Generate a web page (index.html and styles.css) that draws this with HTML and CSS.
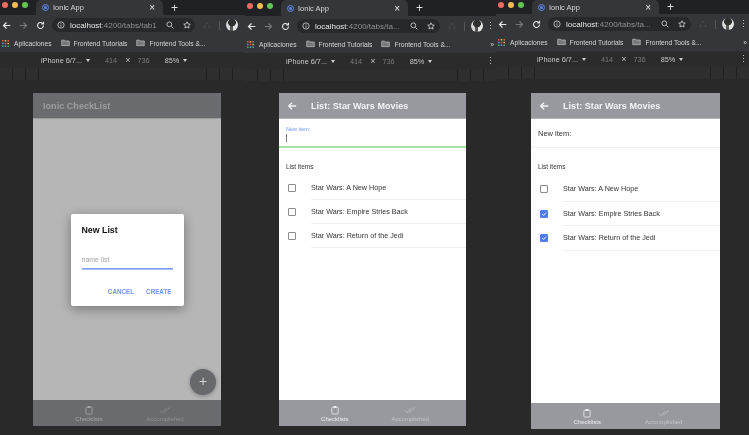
FILE: index.html
```html
<!DOCTYPE html>
<html lang="en">

<head>
    <meta charset="UTF-8">
    <meta name="viewport" content="width=device-width, initial-scale=1.0">
    <title>Ionic CheckList</title>
    <link rel="stylesheet" href="styles.css">
</head>

<body>
    <svg class="sprites" width="0" height="0">
        <symbol id="i-back" viewBox="0 0 12 12"><path d="M11 6H2M6 2 2 6l4 4" fill="none" stroke="currentColor" stroke-width="1.6"/></symbol>
        <symbol id="i-forward" viewBox="0 0 12 12"><path d="M1 6h9M6 2l4 4-4 4" fill="none" stroke="currentColor" stroke-width="1.6"/></symbol>
        <symbol id="i-reload" viewBox="0 0 12 12"><path d="M10 6a4 4 0 1 1-1.2-2.9M10 1v3H7" fill="none" stroke="currentColor" stroke-width="1.5"/></symbol>
        <symbol id="i-info" viewBox="0 0 12 12"><circle cx="6" cy="6" r="4.7" fill="none" stroke="currentColor" stroke-width="1.1"/><path d="M6 5.2v3.4M6 3.2v1" stroke="currentColor" stroke-width="1.1"/></symbol>
        <symbol id="i-search" viewBox="0 0 12 12"><circle cx="5" cy="5" r="3.6" fill="none" stroke="currentColor" stroke-width="1.1"/><path d="m8 8 3 3" stroke="currentColor" stroke-width="1.2"/></symbol>
        <symbol id="i-star" viewBox="0 0 12 12"><path d="m6 1.2 1.5 3.2 3.4.4-2.5 2.3.7 3.4-3.1-1.7-3.1 1.7.7-3.4L1.100 4.800l3.400-.4z" fill="none" stroke="currentColor" stroke-width="1.100"/></symbol>
        <symbol id="i-recycle" viewBox="0 0 12 12"><path d="M4 5 6 1.500 8 5M9.500 6l1.500 3.500H7.500M4.500 9.500H1L2.500 6" fill="none" stroke="currentColor" stroke-width="1.100"/></symbol>
        <symbol id="i-folder" viewBox="0 0 12 10"><path d="M1 1.500h3.500l1 1.200H11v6.300H1z" fill="#77787c" stroke="#c9cacc" stroke-width=".9"/></symbol>
        <symbol id="i-apps" viewBox="0 0 9 9"><path d="M0 0h2v2H0z" fill="#e2574c"/><path d="M3.500 0h2v2h-2z" fill="#e8b33f"/><path d="M7 0h2v2H7z" fill="#e2574c"/><path d="M0 3.500h2v2H0z" fill="#4f8ff0"/><path d="M3.500 3.500h2v2h-2z" fill="#e2574c"/><path d="M7 3.500h2v2H7z" fill="#e8b33f"/><path d="M0 7h2v2H0z" fill="#4caf6a"/><path d="M3.500 7h2v2h-2z" fill="#4f8ff0"/><path d="M7 7h2v2H7z" fill="#4caf6a"/></symbol>
        <symbol id="i-clipboard" viewBox="0 0 12 14"><rect x="1.300" y="2.700" width="9.400" height="10.300" rx="1.400" fill="none" stroke="currentColor" stroke-width="1.200"/><path d="M4 1h4v3H4z" fill="currentColor"/></symbol>
        <symbol id="i-done-all" viewBox="0 0 16 10"><path d="m1 5.500 3 3 5.500-6M7 8l7.500-6.500" fill="none" stroke="currentColor" stroke-width="1"/></symbol>
        <symbol id="i-tick" viewBox="0 0 10 10"><path d="m2 5.200 2.200 2.200L8 3" fill="none" stroke="#fff" stroke-width="1.500"/></symbol>
    </svg>

    <div class="desktop">
        <!-- first window: new list dialog -->
        <section class="window window-one">
            <div class="tabs">
                <span class="lights"><i class="red"></i><i class="yellow"></i><i class="green"></i></span>
                <div class="tab"><span class="favicon"></span><span class="tab-title">Ionic App</span><span class="tab-close">×</span></div>
                <span class="new-tab">+</span>
            </div>
            <div class="toolbar">
                <svg class="nav-icon"><use href="#i-back"/></svg>
                <svg class="nav-icon faded"><use href="#i-forward"/></svg>
                <svg class="nav-icon"><use href="#i-reload"/></svg>
                <div class="omnibox">
                    <svg class="omni-icon"><use href="#i-info"/></svg>
                    <span class="url"><b>localhost</b>:4200/tabs/tab1</span>
                    <svg class="omni-icon"><use href="#i-search"/></svg>
                    <svg class="omni-icon"><use href="#i-star"/></svg>
                </div>
                <svg class="omni-icon dim"><use href="#i-recycle"/></svg>
                <span class="divider"></span>
                <span class="avatar"></span>
            </div>
            <div class="bookmarks">
                <svg class="apps"><use href="#i-apps"/></svg><span>Aplicaciones</span>
                <svg class="folder"><use href="#i-folder"/></svg><span>Frontend Tutorials</span>
                <svg class="folder"><use href="#i-folder"/></svg><span>Frontend Tools &amp;...</span>
            </div>
            <div class="device-bar">
                <span class="device">iPhone 6/7... <i class="caret"></i></span>
                <span class="size">414</span><span class="times">×</span><span class="size">736</span>
                <span class="zoom">85% <i class="caret"></i></span>
            </div>
            <div class="ruler"><i></i><i></i><i></i><i class="wide"></i><i></i><i></i><i></i></div>
            <div class="stage">
                <div class="phone dimmed">
                    <header class="app-bar"><span class="app-title">Ionic CheckList</span></header>
                    <div class="screen centered">
                        <div class="dialog">
                            <h2>New List</h2>
                            <div class="dialog-input">name list</div>
                            <div class="dialog-actions"><span>CANCEL</span><span>CREATE</span></div>
                        </div>
                        <div class="fab">+</div>
                    </div>
                    <footer class="tab-bar">
                        <div class="tab-item"><svg class="tab-icon"><use href="#i-clipboard"/></svg>Checklists</div>
                        <div class="tab-item muted"><svg class="tab-icon wide-icon"><use href="#i-done-all"/></svg>Accomplished</div>
                    </footer>
                </div>
            </div>
        </section>

        <!-- second window: typing a new item -->
        <section class="window window-two">
            <div class="tabs">
                <span class="lights"><i class="red"></i><i class="yellow"></i><i class="green"></i></span>
                <div class="tab"><span class="favicon"></span><span class="tab-title">Ionic App</span><span class="tab-close">×</span></div>
                <span class="new-tab">+</span>
            </div>
            <div class="toolbar">
                <svg class="nav-icon"><use href="#i-back"/></svg>
                <svg class="nav-icon faded"><use href="#i-forward"/></svg>
                <svg class="nav-icon"><use href="#i-reload"/></svg>
                <div class="omnibox">
                    <svg class="omni-icon"><use href="#i-info"/></svg>
                    <span class="url"><b>localhost</b>:4200/tabs/ta...</span>
                    <svg class="omni-icon"><use href="#i-search"/></svg>
                    <svg class="omni-icon"><use href="#i-star"/></svg>
                </div>
                <svg class="omni-icon dim"><use href="#i-recycle"/></svg>
                <span class="divider"></span>
                <span class="avatar"></span>
                <span class="menu">⋮</span>
            </div>
            <div class="bookmarks">
                <svg class="apps"><use href="#i-apps"/></svg><span>Aplicaciones</span>
                <svg class="folder"><use href="#i-folder"/></svg><span>Frontend Tutorials</span>
                <svg class="folder"><use href="#i-folder"/></svg><span>Frontend Tools &amp;...</span>
                <span class="more">»</span>
            </div>
            <div class="device-bar">
                <span class="device">iPhone 6/7... <i class="caret"></i></span>
                <span class="size">414</span><span class="times">×</span><span class="size">736</span>
                <span class="zoom">85% <i class="caret"></i></span>
                <span class="menu">⋮</span>
            </div>
            <div class="ruler"><i></i><i></i><i></i><i class="wide"></i><i></i><i></i><i></i></div>
            <div class="stage">
                <div class="phone">
                    <header class="app-bar"><svg class="bar-back"><use href="#i-back"/></svg><span class="app-title">List: Star Wars Movies</span></header>
                    <div class="screen">
                        <div class="new-item focused"><small>New item:</small><i class="cursor"></i></div>
                        <div class="list-label">List items</div>
                        <ul class="items">
                            <li><span class="check"></span><span class="item-text">Star Wars: A New Hope</span></li>
                            <li><span class="check"></span><span class="item-text">Star Wars: Empire Stries Back</span></li>
                            <li><span class="check"></span><span class="item-text">Star Wars: Return of the Jedi</span></li>
                        </ul>
                    </div>
                    <footer class="tab-bar">
                        <div class="tab-item"><svg class="tab-icon"><use href="#i-clipboard"/></svg>Checklists</div>
                        <div class="tab-item muted"><svg class="tab-icon wide-icon"><use href="#i-done-all"/></svg>Accomplished</div>
                    </footer>
                </div>
            </div>
        </section>

        <!-- third window: items checked -->
        <section class="window window-three">
            <div class="tabs">
                <span class="lights"><i class="red"></i><i class="yellow"></i><i class="green"></i></span>
                <div class="tab"><span class="favicon"></span><span class="tab-title">Ionic App</span><span class="tab-close">×</span></div>
                <span class="new-tab">+</span>
            </div>
            <div class="toolbar">
                <svg class="nav-icon"><use href="#i-back"/></svg>
                <svg class="nav-icon faded"><use href="#i-forward"/></svg>
                <svg class="nav-icon"><use href="#i-reload"/></svg>
                <div class="omnibox">
                    <svg class="omni-icon"><use href="#i-info"/></svg>
                    <span class="url"><b>localhost</b>:4200/tabs/ta...</span>
                    <svg class="omni-icon"><use href="#i-search"/></svg>
                    <svg class="omni-icon"><use href="#i-star"/></svg>
                </div>
                <svg class="omni-icon dim"><use href="#i-recycle"/></svg>
                <span class="divider"></span>
                <span class="avatar"></span>
                <span class="menu">⋮</span>
            </div>
            <div class="bookmarks">
                <svg class="apps"><use href="#i-apps"/></svg><span>Aplicaciones</span>
                <svg class="folder"><use href="#i-folder"/></svg><span>Frontend Tutorials</span>
                <svg class="folder"><use href="#i-folder"/></svg><span>Frontend Tools &amp;...</span>
                <span class="more">»</span>
            </div>
            <div class="device-bar">
                <span class="device">iPhone 6/7... <i class="caret"></i></span>
                <span class="size">414</span><span class="times">×</span><span class="size">736</span>
                <span class="zoom">85% <i class="caret"></i></span>
                <span class="menu">⋮</span>
            </div>
            <div class="ruler"><i></i><i></i><i></i><i class="wide"></i><i></i><i></i><i></i></div>
            <div class="stage">
                <div class="phone">
                    <header class="app-bar"><svg class="bar-back"><use href="#i-back"/></svg><span class="app-title">List: Star Wars Movies</span></header>
                    <div class="screen">
                        <div class="new-item">New item:</div>
                        <div class="list-label">List items</div>
                        <ul class="items">
                            <li><span class="check"></span><span class="item-text">Star Wars: A New Hope</span></li>
                            <li><span class="check on"><svg><use href="#i-tick"/></svg></span><span class="item-text">Star Wars: Empire Stries Back</span></li>
                            <li><span class="check on"><svg><use href="#i-tick"/></svg></span><span class="item-text">Star Wars: Return of the Jedi</span></li>
                        </ul>
                    </div>
                    <footer class="tab-bar">
                        <div class="tab-item"><svg class="tab-icon"><use href="#i-clipboard"/></svg>Checklists</div>
                        <div class="tab-item muted"><svg class="tab-icon wide-icon"><use href="#i-done-all"/></svg>Accomplished</div>
                    </footer>
                </div>
            </div>
        </section>
    </div>
</body>

</html>
```

FILE: styles.css
```css
html,
body {
    margin: 0;
    height: 100%;
    overflow: hidden;
    background-color: #292929;
}

body {
    font-family: "Liberation Sans", Arial, sans-serif;
}

.sprites {
    position: absolute;
}

/* the reference is a scaled-down capture, so everything is a little soft */
.desktop {
    display: flex;
    width: 749px;
    height: 435px;
    filter: blur(0.3px);
}

.window {
    display: flex;
    flex-direction: column;
    flex: none;
    overflow: hidden;
    opacity: 0.999;
}

.window-one {
    width: 245px;
    --tabs-height: 15px;
    --stage-left: 33px;
    --phone-width: 188px;
    --stage-top: 13px;
    --phone-height: 333px;
}

.window-two {
    width: 251px;
    --tabs-height: 16px;
    --stage-left: 34px;
    --phone-width: 187px;
    --stage-top: 12px;
    --phone-height: 333px;
}

.window-three {
    width: 253px;
    --tabs-height: 14px;
    --stage-left: 35px;
    --phone-width: 189px;
    --stage-top: 14px;
    --phone-height: 336px;
}

/* browser chrome */
.tabs {
    display: flex;
    align-items: center;
    height: var(--tabs-height);
    background-color: #202124;
    flex: none;
}

.lights {
    display: flex;
    gap: 4px;
    width: 32px;
    padding-left: 1.500px;
    box-sizing: border-box;
    margin-bottom: 5px;
    flex: none;
}

.lights i {
    width: 6px;
    height: 6px;
    border-radius: 50%;
}

.red {
    background-color: #ed6a5e;
}

.yellow {
    background-color: #f5bf4f;
}

.green {
    background-color: #61c554;
}

.tab {
    display: flex;
    align-items: center;
    width: 127px;
    height: 100%;
    margin-left: 4px;
    padding: 0 6px 0 6px;
    box-sizing: border-box;
    background-color: #35363a;
    border-radius: 5px 5px 0 0;
    color: #d8d9db;
    font-size: 7.500px;
}

.favicon {
    width: 5px;
    height: 5px;
    margin-right: 4px;
    border: 1.500px solid #5b86e5;
    border-radius: 50%;
    background-color: #35363a;
    box-shadow: inset 0 0 0 1px #35363a, inset 0 0 0 3px #5b86e5;
    flex: none;
}

.tab-title {
    flex: 1;
}

.tab-close {
    color: #e8e8e8;
    font-size: 10px;
    margin-right: 2px;
}

.new-tab {
    margin-left: 8px;
    color: #e0e0e0;
    font-size: 12px;
}

.toolbar {
    display: flex;
    align-items: center;
    height: 19px;
    padding-left: 2px;
    padding-top: 1px;
    box-sizing: border-box;
    background-color: #35363a;
    color: #e6e6e6;
    flex: none;
}

.nav-icon {
    width: 9px;
    height: 9px;
    margin-right: 8px;
    flex: none;
}

.faded {
    color: #77787b;
}

.omnibox {
    display: flex;
    align-items: center;
    gap: 9px;
    width: 143px;
    height: 14px;
    margin-left: -1px;
    padding: 0 5px;
    box-sizing: border-box;
    border-radius: 7px;
    background-color: #27282b;
    flex: none;
}

.omni-icon {
    width: 8px;
    height: 8px;
    flex: none;
}

.url {
    flex: 1;
    margin-left: -4px;
    color: #8f9194;
    font-size: 8px;
    white-space: nowrap;
}

.url b {
    color: #e6e6e6;
    font-weight: normal;
}

.dim {
    margin-left: 8px;
    color: #4d4f53;
}

.divider {
    width: 1px;
    height: 9px;
    margin: 0 6px 0 8px;
    background-color: #55565a;
}

.avatar {
    width: 12px;
    height: 12px;
    border-radius: 50%;
    background: radial-gradient(circle at 50% 30%, #2f2f2f 0 35%, transparent 40%), linear-gradient(90deg, #d8d8d8 0 30%, #555 30% 55%, #e4e4e4 55% 100%);
    flex: none;
}

.menu {
    margin-left: auto;
    margin-right: 1px;
    color: #c8c8c8;
    font-size: 9px;
}

.bookmarks {
    display: flex;
    align-items: center;
    height: 18px;
    padding-left: 2px;
    background-color: #35363a;
    color: #d5d6d8;
    font-size: 6.700px;
    white-space: nowrap;
    flex: none;
}

.apps {
    width: 7px;
    height: 7px;
    margin-right: 5px;
}

.folder {
    width: 9px;
    height: 7.500px;
    margin: 0 4px 0 9px;
}

.more {
    margin-left: auto;
    margin-right: 2px;
}

.device-bar {
    display: flex;
    align-items: center;
    height: 16px;
    padding-left: 41px;
    background-color: #2b2b2c;
    color: #c8c8c8;
    font-size: 7.300px;
    white-space: nowrap;
    flex: none;
}

.device {
    width: 64px;
}

.caret {
    display: inline-block;
    margin-left: 2px;
    vertical-align: 1px;
    border-top: 3px solid #d0d0d0;
    border-left: 2px solid transparent;
    border-right: 2px solid transparent;
}

.size {
    color: #77787a;
}

.times {
    margin: 0 7px 0 8px;
    color: #bdbdbd;
    font-size: 9px;
}

.zoom {
    margin-left: 15px;
}

.ruler {
    display: flex;
    gap: 1px;
    height: 12px;
    background-color: #1f1f1f;
    flex: none;
}

.ruler i {
    width: 12px;
    background-color: #2e2e2e;
}

.ruler .wide {
    flex: 1;
}

.stage {
    flex: 1;
    padding-top: var(--stage-top);
    padding-left: var(--stage-left);
    background-color: #292929;
}

/* the app inside the emulator */
.phone {
    display: flex;
    flex-direction: column;
    width: var(--phone-width);
    height: var(--phone-height);
    background-color: #fff;
}

.app-bar {
    display: flex;
    align-items: center;
    height: 26px;
    padding-left: 8px;
    background-color: #98989f;
    border-bottom: 1px solid #b4b4b9;
    color: #f4f4f6;
    box-sizing: border-box;
    flex: none;
}

.bar-back {
    width: 10px;
    height: 10px;
    margin-right: 14px;
}

.app-title {
    font-size: 9px;
    font-weight: bold;
    letter-spacing: 0.050px;
}

.dimmed .app-title {
    padding-left: 2px;
}

.screen {
    position: relative;
    flex: 1;
    color: #333;
}

.centered {
    display: flex;
    align-items: center;
    justify-content: center;
    background-color: #b6b6b6;
}

.dimmed .app-bar {
    background-color: #6b6c70;
    border-bottom-color: #9a9a9c;
    color: #9c9da0;
}

.dimmed .tab-bar {
    background-color: #6a6b6f;
    color: #a6a7a9;
}

.dimmed .muted {
    color: #8f9093;
}

.dialog {
    width: 113px;
    height: 92px;
    padding: 10px 11px 0;
    box-sizing: border-box;
    background-color: #fff;
    border-radius: 2px;
    box-shadow: 0 3px 12px rgba(0, 0, 0, 0.35);
}

.dialog h2 {
    margin: 0;
    color: #111;
    font-size: 8.800px;
    line-height: 12px;
}

.dialog-input {
    height: 13px;
    margin-top: 19px;
    border-bottom: 1px solid #7d9ff5;
    box-shadow: 0 1px 0 #a9c0f8;
    color: #a5a5a5;
    font-size: 7px;
    line-height: 10px;
}

.dialog-actions {
    display: flex;
    justify-content: flex-end;
    gap: 12px;
    margin-top: 19px;
    margin-right: 1px;
    color: #6f94f2;
    font-size: 6.300px;
    font-weight: bold;
}

.fab {
    position: absolute;
    right: 5px;
    bottom: 5px;
    width: 26px;
    height: 26px;
    border-radius: 50%;
    background-color: #67686c;
    box-shadow: 0 1px 4px rgba(0, 0, 0, 0.3);
    color: #d5d5d6;
    font-size: 14px;
    line-height: 25px;
    text-align: center;
}

.new-item {
    height: 29px;
    padding-left: 7px;
    border-bottom: 1px solid #eee;
    box-sizing: border-box;
    font-size: 7.500px;
    line-height: 30px;
}

.new-item.focused {
    display: flex;
    flex-direction: column;
    border-bottom: 2px solid #a4e5a4;
    line-height: normal;
    padding-top: 7px;
}

.new-item small {
    color: #6f94f2;
    font-size: 5.500px;
}

.cursor {
    width: 1px;
    height: 8px;
    margin-top: 2px;
    background-color: #777;
}

.list-label {
    padding: 14px 0 0 7px;
    color: #333;
    font-size: 6.500px;
    line-height: 9px;
}

.items {
    margin: 5px 0 0;
    padding: 0;
    list-style: none;
}

.window-three .items {
    margin-top: 6px;
}

.items li {
    display: flex;
    align-items: center;
    height: 24px;
    padding-left: 9px;
}

.window-three .items li {
    height: 24.500px;
}

.check {
    display: flex;
    width: 8px;
    height: 8px;
    margin-right: 15px;
    border: 1px solid #8b8b8b;
    border-radius: 1px;
    box-sizing: border-box;
    flex: none;
}

.check.on {
    background-color: #4f7df0;
    border-color: #4f7df0;
}

.check svg {
    width: 6px;
    height: 6px;
}

.item-text {
    flex: 1;
    align-self: stretch;
    line-height: 24px;
    border-bottom: 1px solid #f1f1f1;
    box-sizing: border-box;
    font-size: 7.200px;
}

.tab-bar {
    display: flex;
    height: 26px;
    padding: 0 18px;
    background-color: #98989f;
    color: #eeeef0;
    font-size: 6px;
    flex: none;
}

.tab-item {
    display: flex;
    flex: 1;
    flex-direction: column;
    align-items: center;
    justify-content: center;
    gap: 1px;
}

.muted {
    color: #c4c4c8;
}

.tab-icon {
    width: 8px;
    height: 10px;
}

.wide-icon {
    width: 12px;
}
```
